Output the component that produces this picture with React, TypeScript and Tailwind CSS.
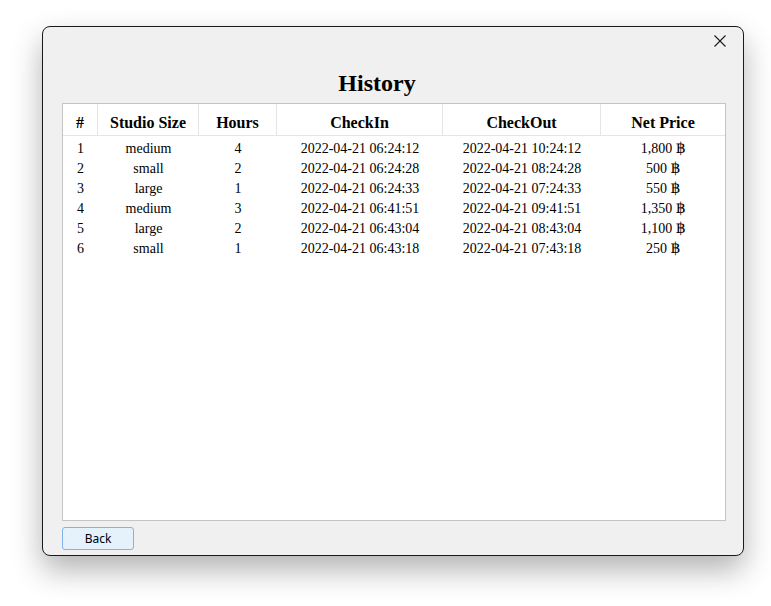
const rows = [
  { id: 1, size: 'medium', hours: 4, checkIn: '2022-04-21 06:24:12', checkOut: '2022-04-21 10:24:12', price: '1,800' },
  { id: 2, size: 'small', hours: 2, checkIn: '2022-04-21 06:24:28', checkOut: '2022-04-21 08:24:28', price: '500' },
  { id: 3, size: 'large', hours: 1, checkIn: '2022-04-21 06:24:33', checkOut: '2022-04-21 07:24:33', price: '550' },
  { id: 4, size: 'medium', hours: 3, checkIn: '2022-04-21 06:41:51', checkOut: '2022-04-21 09:41:51', price: '1,350' },
  { id: 5, size: 'large', hours: 2, checkIn: '2022-04-21 06:43:04', checkOut: '2022-04-21 08:43:04', price: '1,100' },
  { id: 6, size: 'small', hours: 1, checkIn: '2022-04-21 06:43:18', checkOut: '2022-04-21 07:43:18', price: '250' },
]

const headers = ['#', 'Studio Size', 'Hours', 'CheckIn', 'CheckOut', 'Net Price']
const cols = 'grid grid-cols-[35px_101px_78px_166px_158px_124px]'

export default function App() {
  return (
    <div className="w-[771px] h-[606px] bg-white pl-[42px] pt-[26px] overflow-hidden">
      <div className="w-[702px] h-[530px] bg-[#f0f0f0] border border-[#1a1a1a] rounded-[8px] shadow-[0_14px_30px_rgba(0,0,0,0.3)] flex flex-col pl-[19px] pr-[17px]">
        <div className="h-[40px] flex justify-end items-start pt-[8px]">
          <svg width="12" height="12" viewBox="0 0 12 12" className="text-[#1a1a1a]">
            <path d="M0.5 0.5L11.5 11.5M11.5 0.5L0.5 11.5" stroke="currentColor" strokeWidth="1.1" />
          </svg>
        </div>
        <h1 className="text-center text-[24px] font-bold leading-[32px] text-black font-['Liberation_Serif',serif] pr-[34px] mb-[4px]">
          History
        </h1>
        <div className="flex-1 bg-white border border-[#c4c4c4] font-['Liberation_Serif','DejaVu_Serif',serif] text-black overflow-hidden">
          <div className={`${cols} h-[32px] border-b border-[#e5e5e5]`}>
            {headers.map((h, i) => (
              <div
                key={h}
                className={`flex items-center justify-center pt-[7px] text-[16px] font-bold ${i < headers.length - 1 ? 'border-r border-[#e5e5e5]' : ''}`}
              >
                {h}
              </div>
            ))}
          </div>
          <div className="pt-[3px]">
            {rows.map((r) => (
              <div key={r.id} className={`${cols} h-[20px] text-[14px] leading-[20px] text-center`}>
                <div>{r.id}</div>
                <div>{r.size}</div>
                <div>{r.hours}</div>
                <div>{r.checkIn}</div>
                <div>{r.checkOut}</div>
                <div>
                  {r.price} <span className="font-['DejaVu_Serif',serif] text-[15px] leading-[0] text-black">฿</span>
                </div>
              </div>
            ))}
          </div>
        </div>
        <div className="flex pt-[6px] pb-[5px]">
          <button className="w-[72px] h-[23px] bg-[#e5f1fb] border border-[#7eb4ea] rounded-[3px] text-[12px] text-black font-['Noto_Sans',sans-serif] leading-none">
            Back
          </button>
        </div>
      </div>
    </div>
  )
}
